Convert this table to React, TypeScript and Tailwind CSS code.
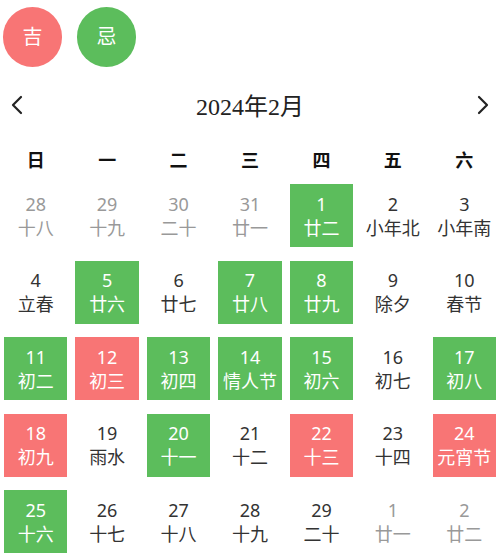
import React from "react";

type Day = { d: number; l: string; other?: boolean; mark?: "good" | "bad" };

const days: Day[] = [
  { d: 28, l: "十八", other: true },
  { d: 29, l: "十九", other: true },
  { d: 30, l: "二十", other: true },
  { d: 31, l: "廿一", other: true },
  { d: 1, l: "廿二", mark: "good" },
  { d: 2, l: "小年北" },
  { d: 3, l: "小年南" },
  { d: 4, l: "立春" },
  { d: 5, l: "廿六", mark: "good" },
  { d: 6, l: "廿七" },
  { d: 7, l: "廿八", mark: "good" },
  { d: 8, l: "廿九", mark: "good" },
  { d: 9, l: "除夕" },
  { d: 10, l: "春节" },
  { d: 11, l: "初二", mark: "good" },
  { d: 12, l: "初三", mark: "bad" },
  { d: 13, l: "初四", mark: "good" },
  { d: 14, l: "情人节", mark: "good" },
  { d: 15, l: "初六", mark: "good" },
  { d: 16, l: "初七" },
  { d: 17, l: "初八", mark: "good" },
  { d: 18, l: "初九", mark: "bad" },
  { d: 19, l: "雨水" },
  { d: 20, l: "十一", mark: "good" },
  { d: 21, l: "十二" },
  { d: 22, l: "十三", mark: "bad" },
  { d: 23, l: "十四" },
  { d: 24, l: "元宵节", mark: "bad" },
  { d: 25, l: "十六", mark: "good" },
  { d: 26, l: "十七" },
  { d: 27, l: "十八" },
  { d: 28, l: "十九" },
  { d: 29, l: "二十" },
  { d: 1, l: "廿一", other: true },
  { d: 2, l: "廿二", other: true },
];

const weekdays = ["日", "一", "二", "三", "四", "五", "六"];

const Chevron = ({ dir }: { dir: "left" | "right" }) => (
  <svg width="14" height="20" viewBox="0 0 14 20" fill="none">
    <polyline
      points={dir === "left" ? "11,2 3,10 11,18" : "3,2 11,10 3,18"}
      stroke="#222"
      strokeWidth="2.2"
      strokeLinecap="round"
      strokeLinejoin="round"
    />
  </svg>
);

export default function App() {
  return (
    <div
      className="w-[500px] h-[557px] bg-white overflow-hidden pt-[7px]"
      style={{ fontFamily: '"Noto Sans", "Noto Sans CJK SC", sans-serif' }}
    >
      {/* legend */}
      <div className="flex gap-[15px] px-[3px]">
        <div className="w-[59px] h-[60px] rounded-full bg-[#f87575] text-white text-[20px] flex items-center justify-center">
          吉
        </div>
        <div className="w-[59px] h-[60px] rounded-full bg-[#5cbd5c] text-white text-[20px] flex items-center justify-center">
          忌
        </div>
      </div>

      {/* month header */}
      <div className="flex items-center justify-between px-[10px] mt-[20px] h-[36px]">
        <Chevron dir="left" />
        <div
          className="text-[24px] text-[#222] pt-[3px]"
          style={{ fontFamily: '"Liberation Serif", "Noto Sans CJK SC", serif' }}
        >
          2024年2月
        </div>
        <Chevron dir="right" />
      </div>

      {/* weekdays */}
      <div className="grid grid-cols-7 h-[40px] mt-[17px] items-center">
        {weekdays.map((w) => (
          <div key={w} className="text-center text-[18px] font-bold text-[#111]">
            {w}
          </div>
        ))}
      </div>

      {/* days */}
      <div className="grid grid-cols-7 gap-y-[13.5px] mt-[4px]">
        {days.map((day, i) => {
          const bg =
            day.mark === "good"
              ? "bg-[#5cbd5c] text-white"
              : day.mark === "bad"
              ? "bg-[#f87575] text-white"
              : day.other
              ? "text-[#999]"
              : "text-[#333]";
          return (
            <div
              key={i}
              className={`mx-[4px] h-[63px] flex flex-col items-center justify-center leading-[24px] text-[18px] ${bg}`}
            >
              <span>{day.d}</span>
              <span className="whitespace-nowrap">{day.l}</span>
            </div>
          );
        })}
      </div>
    </div>
  );
}
